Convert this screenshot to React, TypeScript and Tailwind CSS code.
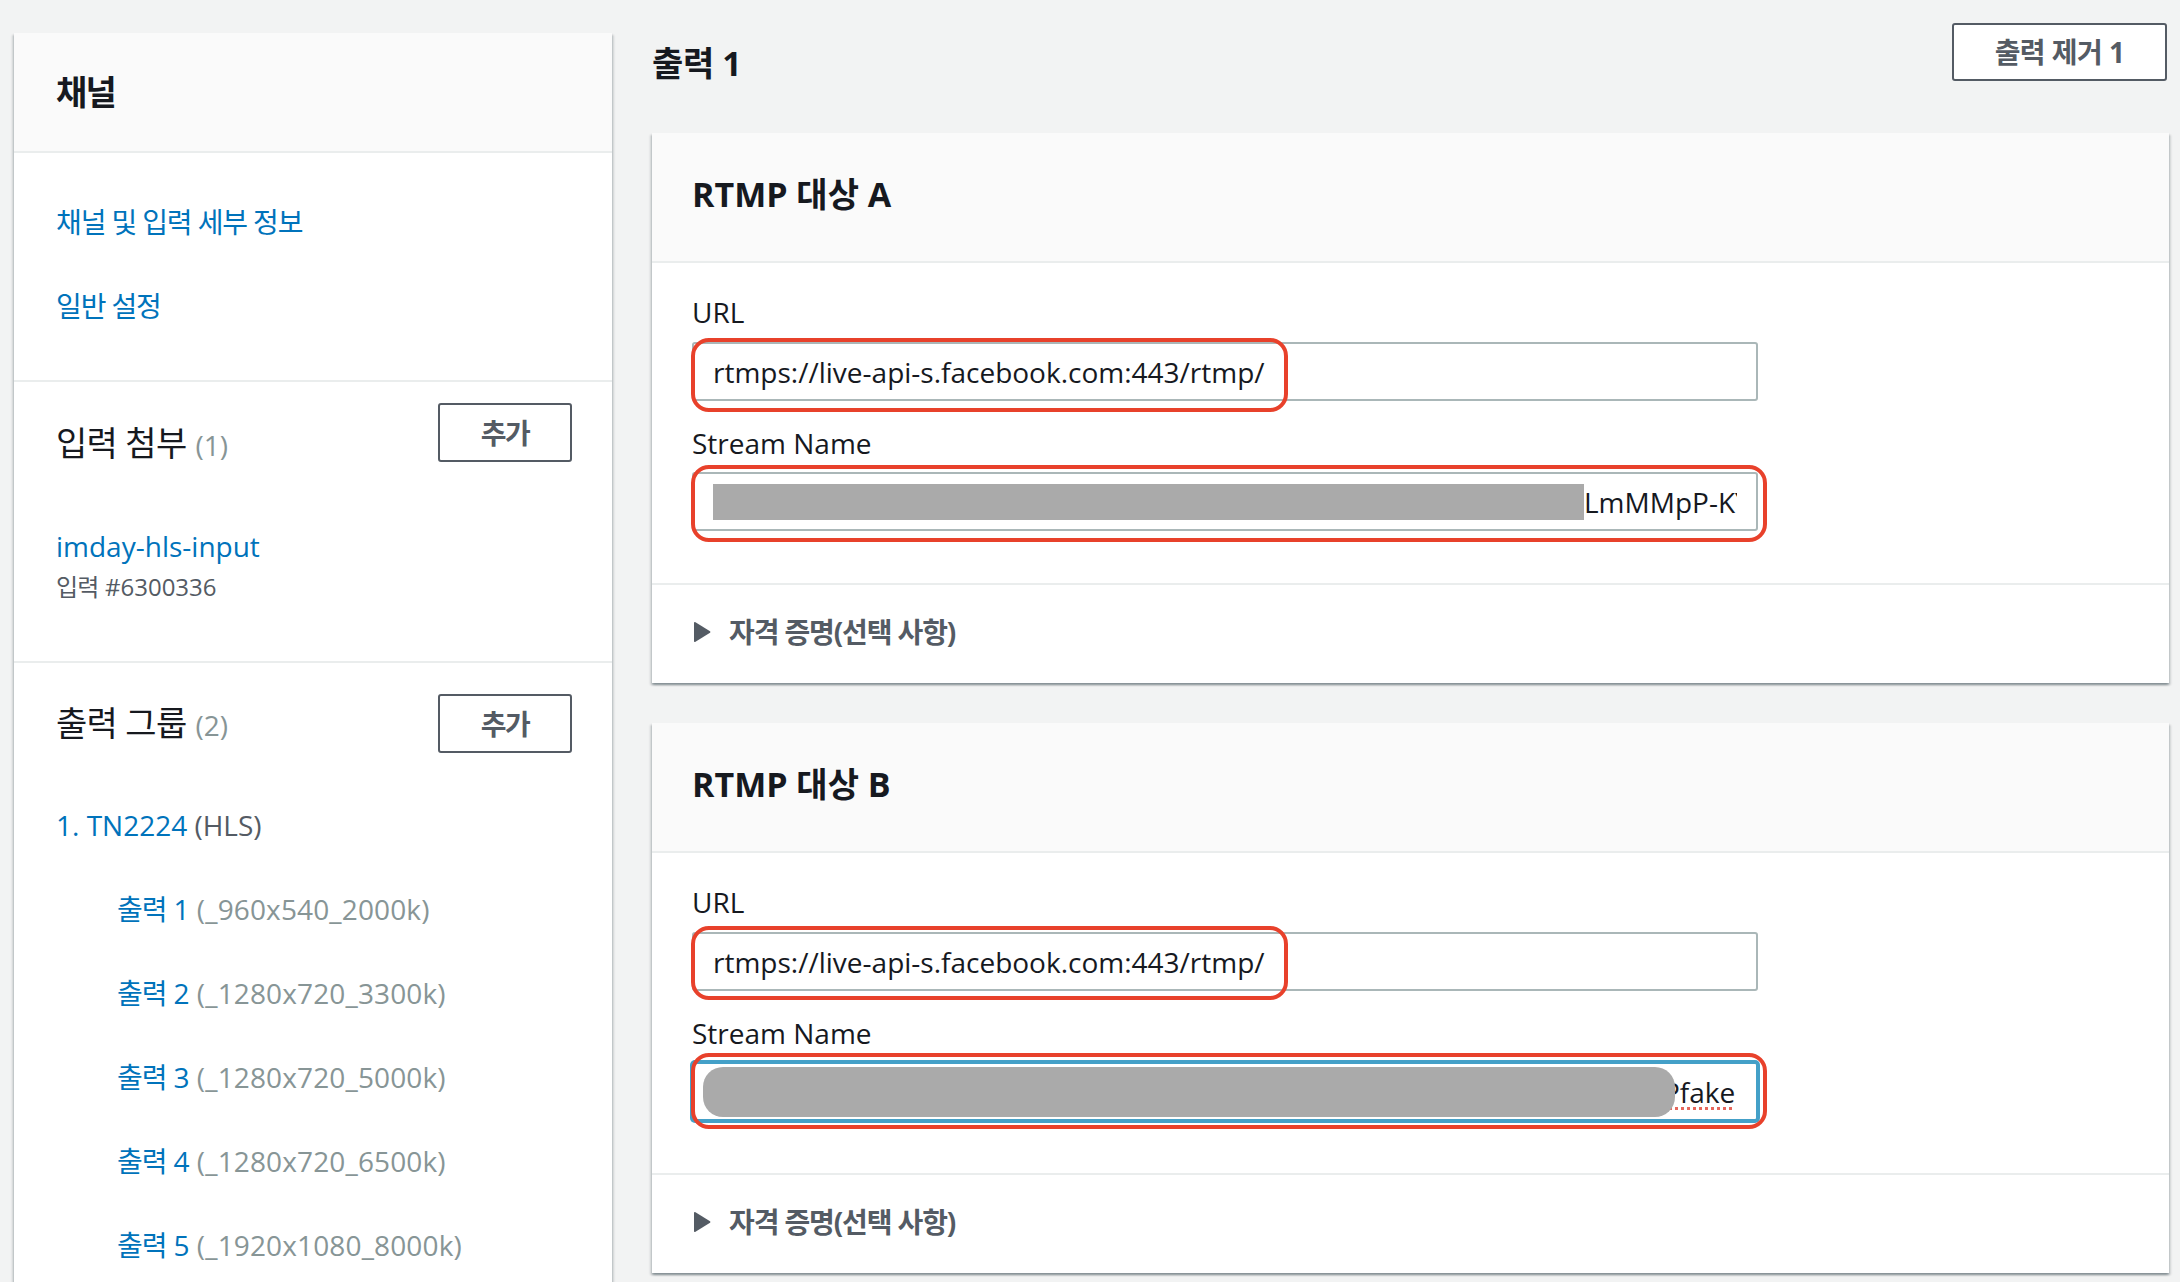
import React from "react";

const cardShadow =
  "shadow-[0_2px_2px_0_rgba(0,28,36,0.3),2px_2px_2px_0_rgba(0,28,36,0.12),-2px_2px_2px_0_rgba(0,28,36,0.12)]";

const OutlineButton = ({
  children,
  className = "",
}: {
  children: React.ReactNode;
  className?: string;
}) => (
  <button
    className={`flex shrink-0 items-center justify-center rounded-[3px] border-2 border-[#545b64] bg-white text-[28px] font-bold text-[#545b64] ${className}`}
  >
    {children}
  </button>
);

const SubOutput = ({ n, spec }: { n: number; spec: string }) => (
  <div className="mt-[44px] h-[40px] pl-[61px] leading-[40px] whitespace-nowrap">
    <span className="text-[#0073bb]">
      <span className="tracking-[-0.04em]">출력</span> {n}
    </span>{" "}
    <span className="tracking-[0.005em] text-[#879596]">{spec}</span>
  </div>
);

const SectionTitle = ({ title, count, className = "" }: { title: string; count: number; className?: string }) => (
  <h3 className={`flex h-[40px] items-baseline gap-[9px] text-[34px] leading-[40px] ${className}`}>
    <span className="tracking-[-0.02em]">{title}</span>
    <span className="text-[28px] text-[#879596]">({count})</span>
  </h3>
);

const Sidebar = () => (
  <aside className={`mt-[10px] w-[598px] shrink-0 bg-white ${cardShadow}`}>
    <div className="flex h-[120px] items-center border-b-2 border-[#eaeded] bg-[#fafafa] px-[42px]">
      <h2 className="text-[34px] font-bold leading-[40px] tracking-[-0.05em]">채널</h2>
    </div>

    <div className="border-b-2 border-[#eaeded] px-[42px] pt-[49px] pb-[54px] text-[28px] leading-[40px] tracking-[-0.04em] text-[#0073bb]">
      <div className="h-[40px]">채널 및 입력 세부 정보</div>
      <div className="mt-[44px] h-[40px]">일반 설정</div>
    </div>

    <div className="border-b-2 border-[#eaeded] pt-[21px] pr-[40px] pb-[58px] pl-[42px]">
      <div className="flex items-start justify-between">
        <SectionTitle title="입력 첨부" count={1} className="mt-[20px]" />
        <OutlineButton className="h-[59px] w-[134px] tracking-[-0.05em]">추가</OutlineButton>
      </div>
      <div className="mt-[63px] h-[40px] text-[28px] leading-[40px] text-[#0073bb]">imday-hls-input</div>
      <div className="mt-[5px] h-[32px] text-[24px] leading-[32px] text-[#545b64]">
        <span className="tracking-[-0.03em]">입력</span> #6300336
      </div>
    </div>

    <div className="pt-[31px] pr-[40px] pb-[40px] pl-[42px] text-[28px]">
      <div className="flex items-start justify-between">
        <SectionTitle title="출력 그룹" count={2} className="mt-[9px]" />
        <OutlineButton className="h-[59px] w-[134px] tracking-[-0.05em]">추가</OutlineButton>
      </div>
      <div className="mt-[52px] h-[40px] leading-[40px]">
        <span className="text-[#0073bb]">1. TN2224</span> <span className="text-[#545b64]">(HLS)</span>
      </div>
      <SubOutput n={1} spec="(_960x540_2000k)" />
      <SubOutput n={2} spec="(_1280x720_3300k)" />
      <SubOutput n={3} spec="(_1280x720_5000k)" />
      <SubOutput n={4} spec="(_1280x720_6500k)" />
      <SubOutput n={5} spec="(_1920x1080_8000k)" />
    </div>
  </aside>
);

const Field = ({
  children,
  focused = false,
  padLeft = "pl-[19px]",
  mark,
}: {
  children: React.ReactNode;
  focused?: boolean;
  padLeft?: string;
  mark: string;
}) => (
  <div className="relative w-[1066px]">
    <div
      className={`flex h-[59px] items-center rounded-[3px] border-2 bg-white pr-[19px] ${padLeft} ${
        focused ? "border-[#44a0c8] ring-2 ring-[#44a0c8]" : "border-[#aab7b8]"
      }`}
    >
      <div className="flex min-w-0 flex-1 items-center overflow-hidden whitespace-nowrap text-[28px] leading-[36px] text-[#16191f]">
        {children}
      </div>
    </div>
    <div className={`pointer-events-none absolute rounded-[18px] border-4 border-[#e8412b] ${mark}`} />
  </div>
);

const Triangle = () => (
  <svg width="17" height="22" viewBox="0 0 17 22" className="shrink-0">
    <path d="M1.5 1.2 L16 10.2 Q17 11 16 11.8 L1.5 20.8 Q0 21.6 0 20 L0 2 Q0 0.4 1.5 1.2 Z" fill="#545b64" />
  </svg>
);

const Destination = ({ letter, focused }: { letter: string; focused?: boolean }) => (
  <section className={`bg-white ${cardShadow}`}>
    <div className="flex h-[130px] items-center border-b-2 border-[#eaeded] bg-[#fafafa] px-[40px] pb-[6px]">
      <h2 className="text-[34px] font-bold leading-[40px]">RTMP 대상 {letter}</h2>
    </div>

    <div className="border-b-2 border-[#eaeded] px-[40px] pt-[31px] pb-[52px]">
      <div className="text-[28px] leading-[36px]">URL</div>
      <div className="mt-[12px]">
        <Field mark={focused ? "-left-[1px] -top-[6px] h-[74px] w-[597px]" : "-left-[1px] -top-[4px] h-[74px] w-[597px]"}>
          rtmps://live-api-s.facebook.com:443/rtmp/
        </Field>
      </div>
      <div className="mt-[24px] text-[28px] leading-[36px]">Stream Name</div>
      <div className="mt-[11px]">
        {focused ? (
          <Field focused padLeft="pl-[9px]" mark="-left-[1px] -top-[9px] h-[76px] w-[1076px]">
            <div className="relative z-10 -mr-[12px] h-[50px] w-[972px] shrink-0 rounded-[20px] bg-[#aaaaaa]" />
            <span className="underline decoration-[#e5675c] decoration-dotted decoration-[3px] underline-offset-[4px]">
              Pfake
            </span>
            <span className="ml-[2px] h-[34px] w-[2px] shrink-0 bg-[#16191f]" />
          </Field>
        ) : (
          <Field mark="-left-[1px] -top-[7px] h-[77px] w-[1076px]">
            <div className="h-[36px] w-[871px] shrink-0 bg-[#aaaaaa]" />
            <span>LmMMpP-KYw9</span>
          </Field>
        )}
      </div>
    </div>

    <div className="flex h-[98px] items-center gap-[18px] px-[42px] pb-[4px]">
      <Triangle />
      <span className="text-[28px] font-bold tracking-[-0.04em] text-[#545b64]">자격 증명(선택 사항)</span>
    </div>
  </section>
);

export default function App() {
  return (
    <div className="flex h-[1282px] items-start gap-[40px] overflow-hidden bg-[#f2f3f3] pt-[23px] pr-[11px] pl-[14px] font-['Open_Sans','Noto_Sans_CJK_KR',sans-serif] text-[#16191f]">
      <Sidebar />
      <main className="flex min-w-0 flex-1 flex-col">
        <div className="flex items-start justify-between">
          <h1 className="mt-[20px] text-[34px] font-bold leading-[40px] tracking-[-0.01em]">출력 1</h1>
          <OutlineButton className="mr-[2px] h-[58px] w-[215px] tracking-[-0.02em]">출력 제거 1</OutlineButton>
        </div>
        <div className="mt-[50px]">
          <Destination letter="A" />
        </div>
        <div className="mt-[40px]">
          <Destination letter="B" focused />
        </div>
      </main>
    </div>
  );
}
